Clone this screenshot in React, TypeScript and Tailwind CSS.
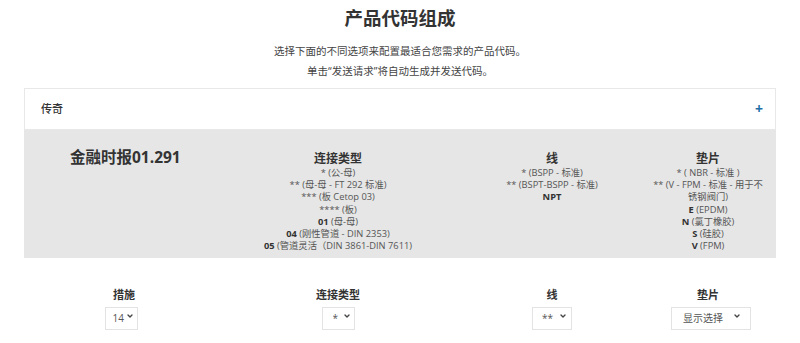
import { ChevronDown } from "lucide-react";

const FONT = { fontFamily: '"Open Sans", "Noto Sans CJK SC", sans-serif' };

type Line = { code?: string; text?: string };

const COLUMNS: { title: string; lines: Line[] }[] = [
  {
    title: "连接类型",
    lines: [
      { text: "* (公-母)" },
      { text: "** (母-母 - FT 292 标准)" },
      { text: "*** (板 Cetop 03)" },
      { text: "**** (板)" },
      { code: "01", text: " (母-母)" },
      { code: "04", text: " (刚性管道 - DIN 2353)" },
      { code: "05", text: " (管道灵活（DIN 3861-DIN 7611)" },
    ],
  },
  {
    title: "线",
    lines: [
      { text: "* (BSPP - 标准)" },
      { text: "** (BSPT-BSPP - 标准)" },
      { code: "NPT" },
    ],
  },
  {
    title: "垫片",
    lines: [
      { text: "* ( NBR - 标准 )" },
      { text: "** (V - FPM - 标准 - 用于不锈钢阀门)" },
      { code: "E", text: " (EPDM)" },
      { code: "N", text: " (氯丁橡胶)" },
      { code: "S", text: " (硅胶)" },
      { code: "V", text: " (FPM)" },
    ],
  },
];

// nudge: the selects don't sit exactly under their labels in the original
const SELECTS = [
  { label: "措施", value: "14", w: "w-[33px] mr-[6px]", pad: "pl-[7px]", chev: "right-[4px]" },
  { label: "连接类型", value: "*", w: "w-[33px]", pad: "pl-[10px]", chev: "right-[4px]" },
  { label: "线", value: "**", w: "w-[40px]", pad: "pl-[9px]", chev: "right-[5px]" },
  { label: "垫片", value: "显示选择", w: "w-[80px] ml-[6px]", pad: "pl-[11px]", chev: "right-[10px]" },
];

const GRID = "grid grid-cols-[200px_228px_200px_112px]";

function Spec({ title, lines }: { title: string; lines: Line[] }) {
  return (
    <div className="flex flex-col items-center text-center">
      <h3 className="text-[12px] leading-[16px] font-semibold text-[#333]">{title}</h3>
      <div className="text-[9.3px] leading-[12.2px] text-[#555]">
        {lines.map((l, i) => (
          <div key={i}>
            {l.code ? <span className="font-bold text-[#333]">{l.code}</span> : null}
            {l.text}
          </div>
        ))}
      </div>
    </div>
  );
}

function Picker({ label, value, w, pad, chev }: (typeof SELECTS)[number]) {
  return (
    <div className="flex flex-col items-center">
      <label className="text-[11px] leading-[16px] font-semibold text-[#333]">{label}</label>
      <div className={`relative mt-[1px] ${w}`}>
        <select
          defaultValue={value}
          className={`h-[23px] w-full appearance-none border border-[#e3e3e3] bg-white ${pad} text-[10px] text-[#555] outline-none`}
        >
          <option>{value}</option>
        </select>
        <ChevronDown
          size={8}
          strokeWidth={4}
          className={`pointer-events-none absolute top-[8px] text-[#444] ${chev}`}
        />
      </div>
    </div>
  );
}

export default function App() {
  return (
    <div className="h-[343px] w-[800px] overflow-hidden bg-white" style={FONT}>
      <header className="flex flex-col items-center pt-[6px]">
        <h1 className="text-[18.5px] leading-[24px] font-bold text-[#333]">产品代码组成</h1>
        <p className="mt-[11px] text-[10.5px] leading-[20px] text-[#444]">
          选择下面的不同选项来配置最适合您需求的产品代码。
        </p>
        <p className="text-[10.5px] leading-[20px] text-[#444]">单击“发送请求”将自动生成并发送代码。</p>
      </header>

      <section className="mx-[24px] mt-[7px]">
        <div className="flex h-[42px] items-center justify-between border border-[#e8e8e8] bg-white pl-[16px] pr-[12px]">
          <span className="text-[11px] font-medium text-[#333]">传奇</span>
          <span className="text-[14px] leading-none font-bold text-[#1e6ea8]">+</span>
        </div>
        <div className={`${GRID} h-[128px] bg-[#e6e6e6] pt-[21px]`}>
          <div className="pl-[46px]">
            <h2 className="-mt-[3px] text-[15.5px] leading-[18px] font-bold text-[#333]">金融时报01.291</h2>
          </div>
          {COLUMNS.map((c) => (
            <Spec key={c.title} {...c} />
          ))}
        </div>
      </section>

      <section className={`${GRID} mx-[24px] mt-[29px]`}>
        {SELECTS.map((s) => (
          <Picker key={s.label} {...s} />
        ))}
      </section>
    </div>
  );
}
